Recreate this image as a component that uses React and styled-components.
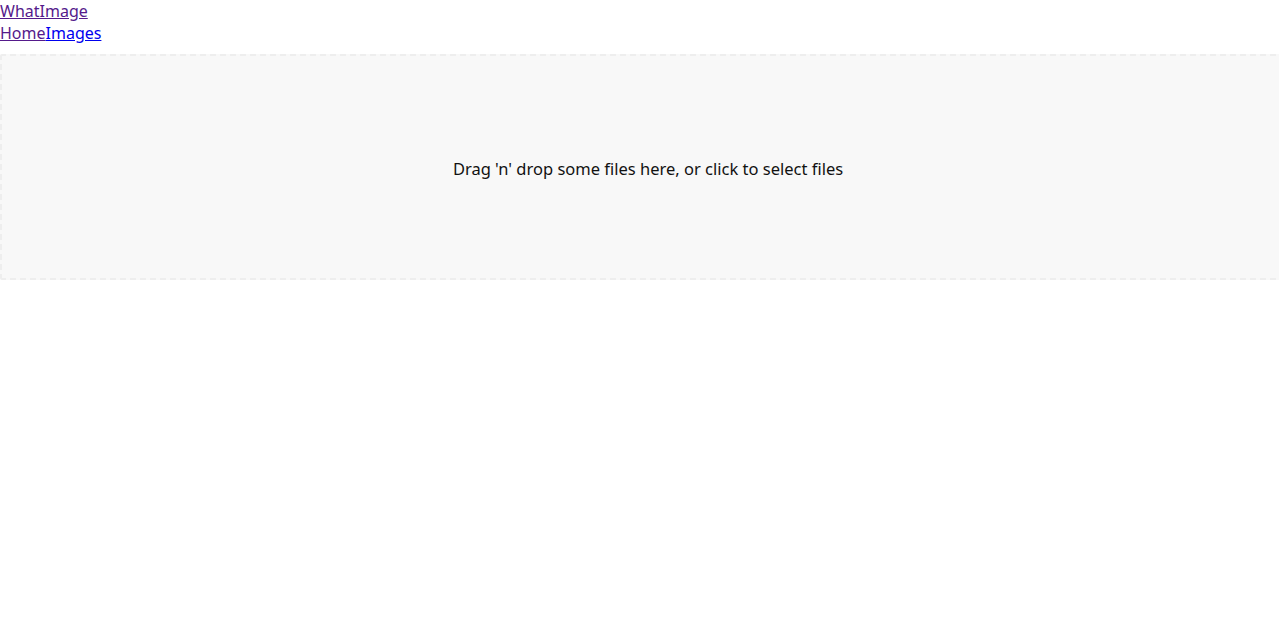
import React from "react";
import styled, {createGlobalStyle} from "styled-components";

const GlobalStyle = createGlobalStyle`
body {
    margin: 0;
    font-family: "Noto Sans", "Open Sans", sans-serif;
    font-size: 16px;
    overflow-x: hidden;
    background: #ffffff;
}
`;

const Brand = styled.div`
    line-height: 22px;
`;

const Nav = styled.nav`
    display: flex;
    line-height: 22px;
`;

const NavLink = styled.a`
    color: ${props => props.visited ? "#551a8b" : "#0000ee"};
    text-decoration: underline;
`;

const Dropzone = styled.div`
    margin-top: 10px;
    height: 226px;
    width: calc(100% + 17px);
    box-sizing: border-box;
    display: flex;
    align-items: center;
    justify-content: center;
    border: 2px dashed #eeeeee;
    border-radius: 2px;
    background-color: #f8f8f8;
    color: #111111;
    cursor: pointer;
`;

const Hint = styled.p`
    margin: 0;
    font-size: 16.5px;
    padding-top: 2px;
`;

export default function App() {
    return (
        <>
            <GlobalStyle/>
            <header>
                <Brand>
                    <NavLink href="#" visited>WhatImage</NavLink>
                </Brand>
                <Nav>
                    <NavLink href="#" visited>Home</NavLink>
                    <NavLink href="#">Images</NavLink>
                </Nav>
            </header>
            <Dropzone>
                <Hint>Drag 'n' drop some files here, or click to select files</Hint>
            </Dropzone>
        </>
    );
}
